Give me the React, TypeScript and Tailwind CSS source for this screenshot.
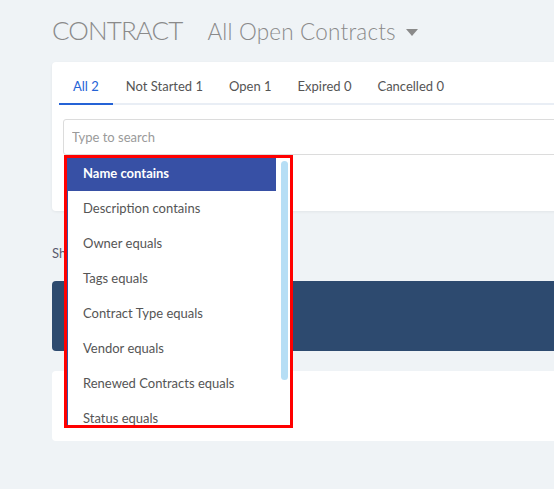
import React from 'react';

const tabs = [
  { label: 'All 2', active: true },
  { label: 'Not Started 1' },
  { label: 'Open 1' },
  { label: 'Expired 0' },
  { label: 'Cancelled 0' },
];

const filters = [
  'Name contains',
  'Description contains',
  'Owner equals',
  'Tags equals',
  'Contract Type equals',
  'Vendor equals',
  'Renewed Contracts equals',
  'Status equals',
];

const FilterDropdown = () => (
  <div className="absolute left-[4px] top-[39px] z-10 w-[223px] h-[267px] bg-white border-l border-[#3a4fa3] outline-3 outline-solid outline-[#ff0000] overflow-hidden">
    <div className="-mt-[2px] w-[208px]">
      {filters.map((f, i) => (
        <div
          key={f}
          className={
            i === 0
              ? 'h-[35px] flex items-center pl-[15px] bg-[#3750a5] text-white font-bold text-[13px]'
              : 'h-[35px] flex items-center pl-[15px] text-[#555] text-[13px]'
          }
        >
          {f}
        </div>
      ))}
    </div>
    {/* scrollbar */}
    <div className="absolute right-[2px] top-[3px] w-[7px] h-[219px] rounded-full bg-[#b6def5]" />
  </div>
);

export default function App() {
  return (
    <div
      className="w-full h-[489px] bg-[#eff3f6] overflow-hidden pl-[52px] pt-[13px]"
      style={{ fontFamily: 'Lato, "Liberation Sans", sans-serif' }}
    >
      {/* Title */}
      <div className="flex items-baseline whitespace-nowrap text-[#8a8a8a]">
        <h1 className="text-[26px] leading-[34px] font-light tracking-[-0.9px]">CONTRACT</h1>
        <div className="ml-[25px] flex items-center text-[22.5px] font-light">
          <span className="tracking-[0.2px]">All Open Contracts</span>
          <svg width="12" height="7" viewBox="0 0 12 7" className="ml-[10px] mt-[2px]">
            <path d="M0 0 L12 0 L6 7 Z" fill="#8a8a8a" />
          </svg>
        </div>
      </div>

      {/* Filter card */}
      <div className="mt-[13px] w-[560px] bg-white rounded-[4px] shadow-[0_1px_3px_rgba(0,0,0,0.06)] pt-[8px] pb-[56px]">
        <div className="ml-[7px] flex border-b-2 border-[#e9eef5] text-[13px] whitespace-nowrap">
          {tabs.map((t) => (
            <div
              key={t.label}
              className={
                t.active
                  ? 'h-[35px] -mb-[2px] px-[14px] flex items-center border-b-2 border-[#2563d6] text-[#2563d6]'
                  : 'h-[35px] -mb-[2px] px-[13px] flex items-center border-b-2 border-transparent text-[#555]'
              }
            >
              {t.label}
            </div>
          ))}
        </div>
        <div className="relative ml-[11px] mt-[14px]">
          <input
            placeholder="Type to search"
            className="w-full h-[36px] border border-[#dcdcdc] rounded-[3px] px-[8px] text-[13px] text-[#555] placeholder:text-[#9a9a9a] outline-none"
          />
          <FilterDropdown />
        </div>
      </div>

      {/* Results */}
      <div className="mt-[33px] text-[13px] leading-[18px] text-[#5a5a6e] whitespace-nowrap">Showing 1 - 2</div>
      <div className="mt-[19px] w-[560px] h-[70px] bg-[#2d4a6f] rounded-[4px] pl-[14px] pt-[41px]">
        <div className="w-[10px] h-[15px] bg-[#f5c400]" />
      </div>
      <div className="mt-[20px] w-[560px] h-[70px] bg-white rounded-[4px] pl-[14px] pt-[40px]">
        <div className="w-[10px] h-[15px] bg-[#f5c400]" />
      </div>
    </div>
  );
}
